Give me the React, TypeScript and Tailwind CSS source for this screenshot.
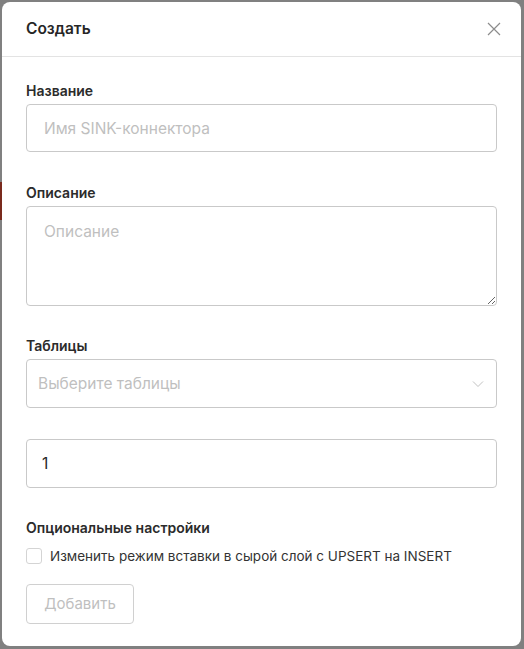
import React from 'react'

const font = { fontFamily: 'Inter, "Noto Sans", sans-serif' }

const Label = ({ children }: { children: React.ReactNode }) => (
  <div className="h-5 mb-[3px] text-[14px] leading-5 font-semibold text-[#2b2b2b]">{children}</div>
)

export default function App() {
  return (
    <div className="flex h-[649px] w-[524px] bg-[#808080] overflow-hidden" style={font}>
      <div className="flex flex-col w-[2px] shrink-0">
        <div className="h-[182px]" />
        <div className="h-[38px] bg-[#7a2a1d]" />
      </div>
      <div className="flex flex-col mt-[2px] mb-[3px] w-[519px] rounded-lg bg-white">
        <div className="flex h-[55px] shrink-0 items-center justify-between border-b border-[#e3e3e3] pl-6 pr-[20px]">
          <span className="text-[15.5px] font-semibold text-[#262626]">Создать</span>
          <svg width="14" height="14" viewBox="0 0 14 14" className="text-[#8c8c8c]">
            <path d="M1 1 L13 13 M13 1 L1 13" stroke="currentColor" strokeWidth="1.2" fill="none" />
          </svg>
        </div>

        <div className="flex flex-col px-6 pt-[24px] pb-6">
          <Label>Название</Label>
          <input
            className="h-12 w-full shrink-0 rounded border border-[#c9c9c9] px-[17px] text-[15.5px] text-[#262626] placeholder:text-[#bfbfbf] outline-none"
            placeholder="Имя SINK-коннектора"
            style={font}
          />

          <div className="mt-[31px]">
            <Label>Описание</Label>
          </div>
          <textarea
            className="h-[100px] w-full shrink-0 rounded border border-[#c9c9c9] px-[17px] py-[13px] text-[15.5px] text-[#262626] placeholder:text-[#bfbfbf] outline-none"
            placeholder="Описание"
            style={font}
          />

          <div className="mt-[30px]">
            <Label>Таблицы</Label>
          </div>
          <div className="flex h-[49px] w-full shrink-0 items-center justify-between rounded border border-[#c9c9c9] pl-[11px] pr-[12px]">
            <span className="text-[15.5px] text-[#bfbfbf]">Выберите таблицы</span>
            <svg width="12" height="8" viewBox="0 0 12 8" className="text-[#c2c2c2]">
              <path d="M1 1.5 L6 6.5 L11 1.5" stroke="currentColor" strokeWidth="1" fill="none" />
            </svg>
          </div>

          <input
            className="mt-[31px] h-[49px] w-full shrink-0 rounded border border-[#c9c9c9] px-[15px] text-[15.5px] text-[#262626] outline-none"
            defaultValue="1"
            style={font}
          />

          <div className="mt-[30px]">
            <Label>Опциональные настройки</Label>
          </div>
          <div className="mt-[5px] flex items-center gap-[8px]">
            <span className="h-4 w-4 shrink-0 rounded-[3px] border border-[#d4d4d4] bg-white" />
            <span className="text-[13.5px] leading-5 text-[#333333]">
              Изменить режим вставки в сырой слой с UPSERT на INSERT
            </span>
          </div>

          <div className="mt-[18px]">
            <button className="h-10 w-[108px] rounded border border-[#d0d0d0] bg-white text-[15px] text-[#bfbfbf]" style={font}>
              Добавить
            </button>
          </div>
        </div>
      </div>
    </div>
  )
}
